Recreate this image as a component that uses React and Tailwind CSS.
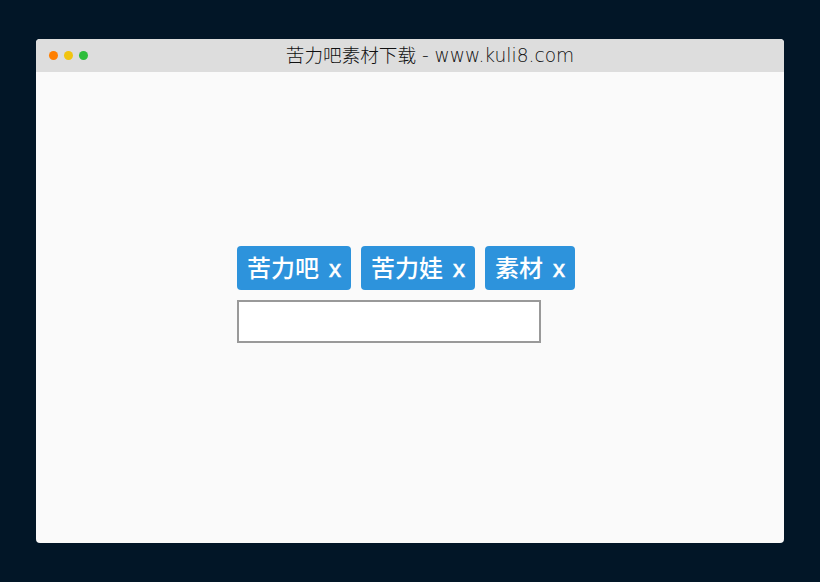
const tags = ["苦力吧", "苦力娃", "素材"];

export default function App() {
  return (
    <div className="h-[582px] bg-[#021627] px-9 pt-[39px] font-['Liberation_Sans','Noto_Sans_CJK_SC',sans-serif]">
      <div className="flex h-[504px] flex-col overflow-hidden rounded-[4px] bg-[#fafafa]">
        <div className="relative flex h-[33px] items-center justify-center bg-[#dddddd] pl-10">
          <div className="absolute left-[12.5px] top-3 flex gap-[6px]">
            <span className="h-[9px] w-[9px] rounded-full bg-[#ff7f00]" />
            <span className="h-[9px] w-[9px] rounded-full bg-[#f1c40f]" />
            <span className="h-[9px] w-[9px] rounded-full bg-[#2ebd3b]" />
          </div>
          <h1 className="font-['DejaVu_Sans','Noto_Sans_CJK_SC',sans-serif] text-[18.6px] font-extralight text-[#111111]">
            苦力吧素材下载 - www.kuli8.com
          </h1>
        </div>
        <div className="pl-[201px] pt-[174px]">
          <div className="flex gap-[10px]">
            {tags.map((tag) => (
              <span
                key={tag}
                className="flex h-[44px] items-center gap-[10px] rounded-[4px] bg-[#2d93dc] px-[10px] pt-[1px] text-[24px] font-medium text-white"
              >
                {tag}
                <span className="w-[12px] text-[24px] leading-none [-webkit-text-stroke:0.6px_white]">x</span>
              </span>
            ))}
          </div>
          <input
            type="text"
            className="mt-[10px] block h-[43px] w-[304px] border-2 border-[#999999] bg-white outline-none"
          />
        </div>
      </div>
    </div>
  );
}
